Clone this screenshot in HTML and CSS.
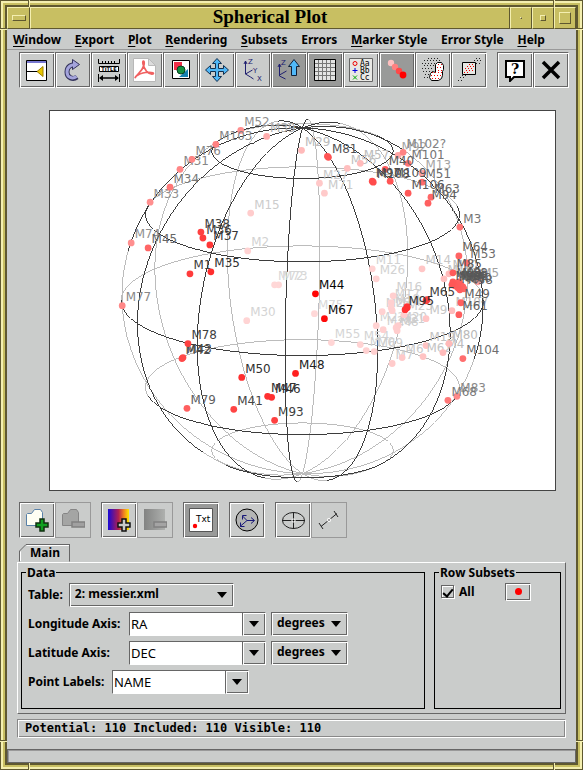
FILE: index.html
```html
<!DOCTYPE html>
<html lang="en">
<head>
<meta charset="utf-8">
<title>Spherical Plot</title>
<link rel="stylesheet" href="styles.css">
</head>
<body>
<div class="window">
  <i class="notch n1"></i><i class="notch n2"></i><i class="notch n3"></i><i class="notch n4"></i>
  <i class="notch v n5"></i><i class="notch v n6"></i><i class="notch v n7"></i><i class="notch v n8"></i>
  <header class="titlebar">
    <button class="tb" aria-label="Window menu"><span class="glyph wide"></span></button>
    <h1>Spherical Plot</h1>
    <button class="tb" aria-label="Lower"><span class="glyph dot"></span></button>
    <button class="tb" aria-label="Minimize"><span class="glyph small"></span></button>
    <button class="tb" aria-label="Maximize"><span class="glyph big"></span></button>
  </header>
  <nav class="menu">
    <a href="#"><u>W</u>indow</a><a href="#"><u>E</u>xport</a><a href="#"><u>P</u>lot</a><a href="#"><u>R</u>endering</a><a href="#"><u>S</u>ubsets</a><a href="#">Errors</a><a href="#"><u>M</u>arker Style</a><a href="#">Error Style</a><a href="#"><u>H</u>elp</a>
  </nav>
  <div class="toolbar">
    <button aria-label="Split window"><svg viewBox="0 0 24 24"><path fill="#fff" stroke="#000" d="M1.500 2.500h20v20h-20z"/><path fill="#7777d0" d="M2 3h19v2H2z"/><path stroke="#000" d="M1 13.500h14"/><path fill="#e8c800" stroke="#a08000" d="M12 13.500l6-5v10z"/></svg></button>
    <button aria-label="Replot"><svg viewBox="0 0 24 24"><path fill="none" stroke="#33335c" stroke-width="5" d="M16 19c-4 3-10 1-10-5s5-8 9-7"/><path fill="#a4a4dc" stroke="#33335c" d="M11.500 1.500l7 5-7 5z"/><path fill="none" stroke="#a4a4dc" stroke-width="3" d="M15.500 18.500c-4 3-9.500 1-9.500-4.500s5-8 9-7"/></svg></button>
    <button aria-label="Axis titles"><svg viewBox="0 0 24 24"><path fill="none" stroke="#000" d="M1.500 1v4.500h21V1M5.500 3v2M8.500 3v2M11.500 3v2M14.500 3v2M17.500 3v2"/><path fill="#fff" stroke="#000" d="M2.500 8.500h19v5h-19z"/><text class="tinytitle" x="12" y="13">TITLE</text><path fill="none" stroke="#000" d="M1.500 16v8M22.500 16v8"/><path stroke="#000" stroke-width="1.500" d="M3 20h18"/><path d="M2 20l4-3v6zM22 20l-4-3v6z"/></svg></button>
    <button aria-label="Export PDF"><svg viewBox="0 0 24 24"><path fill="#fff" stroke="#b8b8b8" d="M.500.500h15l7 7v16H.500z"/><path fill="#ddd" stroke="#bbb" d="M15.500.500v7h7z"/><path fill="none" stroke="#f06060" stroke-width="1.700" d="M2 20c2-4 7-6 9-13 1-5-2-5-1-1 1 5 5 11 10 10 3-2-9-3-15 1-2 1-3 2-3 3z"/></svg></button>
    <button aria-label="Export image"><svg viewBox="0 0 24 24"><path fill="#fff" stroke="#000" d="M3.500 2.500h17v18h-17z"/><path fill="#f03048" d="M5 4h8v8H5z"/><path fill="#1480b0" d="M19 11v8h-9z"/><circle cx="12" cy="12" r="4" fill="#149040" stroke="#064020"/></svg></button>
    <button aria-label="Rescale"><svg viewBox="0 0 24 24"><path fill="#50b8f8" stroke="#103050" d="M12 .500l4.500 5h-3v5h5v-3l5 4.500-5 4.500v-3h-5v5h3l-4.500 5-4.500-5h3v-5h-5v3L.500 12l5-4.500v3h5v-5h-3z"/></svg></button>
    <button aria-label="Axes"><svg viewBox="0 0 24 24"><path fill="none" stroke="#202070" d="M4.500 3v13l5 3 3 2M4.500 16l7-4M3 6l1.500-3L6 6"/><g class="axes"><text x="7" y="6">Z</text><text x="12" y="15">Y</text><text x="16" y="23">X</text></g></svg></button>
    <button class="on" aria-label="Keep north up"><svg viewBox="0 0 24 24"><path fill="none" stroke="#202070" d="M2.500 6v12l6 3M2.500 17l7-4M1 9l1.500-3L4 9"/><g class="axes"><text x="4" y="7">Z</text></g><path fill="#50b8f8" stroke="#102038" d="M17 1.500l5.500 7h-3v9h-5v-9h-3z"/></svg></button>
    <button class="on" aria-label="Grid"><svg viewBox="0 0 24 24"><path fill="#e4e4e4" stroke="#000" d="M1.500 1.500h21v21h-21z"/><path stroke="#777" d="M5.500 2v20M9.500 2v20M13.500 2v20M17.500 2v20M2 5.500h20M2 9.500h20M2 13.500h20M2 17.500h20"/></svg></button>
    <button aria-label="Legend"><svg viewBox="0 0 24 24"><path fill="#e8e8e4" stroke="#666" d="M.500.500h23v23H.500z"/><circle cx="6" cy="5.500" r="2" fill="none" stroke="#e00"/><path stroke="#00d" d="M3.500 12.500h5M6 10v5"/><path stroke="#0a0" d="M4 17.500l4 4M8 17.500l-4 4"/><g class="legend"><text x="11" y="8">Aa</text><text x="11" y="15">Bb</text><text x="11" y="22">Cc</text></g></svg></button>
    <button class="on" aria-label="Fog"><svg viewBox="0 0 24 24"><circle cx="6" cy="5" r="3.200" fill="#ffc0c0"/><circle cx="10" cy="9" r="3.200" fill="#ff8080"/><circle cx="14" cy="13" r="3.200" fill="#ff4848"/><circle cx="18" cy="17" r="3.400" fill="#f00"/></svg></button>
    <button aria-label="Blob subset"><svg viewBox="0 0 24 24"><path class="specks" d="M7 .500h10M3 2.500h17M1 5.500h14M3 7.500h10M1 10.500h11M2 13.500h7M4 16.500h4M3 19.500h4"/><path fill="#fff" stroke="#000" d="M14.500 6.500l2-2h4l2 3v4l-1 2v4l-1 3-3 2h-7l-2-3 1-4 2-2 3 1z"/><path class="reds" d="M17 6.500h4M16 9.500h6M17 12.500h4M11 14.500h10M10 17.500h10M11 20.500h7"/></svg></button>
    <button aria-label="Visible subset"><svg viewBox="0 0 24 24"><path class="specks" d="M19 .500h5M17 2.500h7M19 5.500h4M5 17.500h5M3 19.500h6M1 22.500h5"/><path fill="#e8e8e4" stroke="#000" d="M5.500 4.500h13v12h-13z"/><path class="reds" d="M12 6.500h6M10 8.500h7M8 10.500h8M9 12.500h7M7 14.500h6"/></svg></button>
    <button class="gap" aria-label="Help"><svg viewBox="0 0 24 24"><path fill="#fff" stroke="#000" stroke-width="2" d="M3 3h18v16h-10l-4 4v-4H3z"/><text class="help" x="12" y="16">?</text></svg></button>
    <button aria-label="Close"><svg viewBox="0 0 24 24"><path stroke="#000" stroke-width="3.500" d="M4 4l16 16M20 4L4 20"/></svg></button>
  </div>
  <main>
    <svg class="plot" id="plot" viewBox="49 110 507 380" role="img" aria-label="Sky positions on a sphere"></svg>
    <div class="toolbar lower">
      <button aria-label="Add dataset"><svg viewBox="0 0 24 24"><path fill="#fffff4" stroke="#5880a8" d="M1.500 17.500v-11l1-1h4l3-4h6l2 3v13z"/><path fill="#10a020" stroke="#103010" stroke-width="1.500" d="M15 11h4v4h4v4h-4v4h-4v-4h-4v-4h4z"/></svg></button>
      <button disabled aria-label="Remove dataset"><svg viewBox="0 0 24 24"><path fill="#a4a5a4" stroke="#858585" d="M1.500 17.500v-11l1-1h4l3-4h6l2 3v13z"/><path fill="#a0a0a0" stroke="#808080" stroke-width="1.500" d="M11 14h13v5H11z"/></svg></button>
      <button class="gap" aria-label="Add auxiliary axis"><svg viewBox="0 0 24 24"><defs><linearGradient id="aux"><stop offset="0" stop-color="#1808d8"/><stop offset=".5" stop-color="#b02050"/><stop offset=".75" stop-color="#f08020"/><stop offset="1" stop-color="#ffe800"/></linearGradient><linearGradient id="mono"><stop offset="0" stop-color="#828382"/><stop offset="1" stop-color="#aeb0ae"/></linearGradient></defs><path fill="url(#aux)" d="M1 1h21v21H1z"/><path fill="#c8c8c8" stroke="#111" stroke-width="1.500" d="M15 11h4v4h4v4h-4v4h-4v-4h-4v-4h4z"/></svg></button>
      <button disabled aria-label="Remove auxiliary axis"><svg viewBox="0 0 24 24"><path fill="url(#mono)" d="M1 1h21v21H1z"/><path fill="#a4a4a4" stroke="#808080" stroke-width="1.500" d="M11 14h13v5H11z"/></svg></button>
      <button class="gap on" aria-label="Point labels"><svg viewBox="0 0 24 24"><path fill="#fff" stroke="#555" d="M.500.500h23v23H.500z"/><circle cx="6" cy="18" r="2.200" fill="#f00"/><text class="txt" x="7" y="14">Txt</text></svg></button>
      <button class="gap" aria-label="Radial axis"><svg viewBox="0 0 24 24"><circle cx="12" cy="12" r="11" fill="#b4b5b4" stroke="#000"/><path fill="none" stroke="#181878" d="M12 12.500h7M16 9.500l3.500 3-3.500 3M12 12.500L7.500 8M7.500 11.500v-4h4M12 12.500l-7 6M5.500 14.500v4h4"/></svg></button>
      <button class="gap" aria-label="Tangent errors"><svg viewBox="0 0 24 24"><ellipse cx="12.500" cy="12.500" rx="11" ry="8" fill="none" stroke="#222"/><path stroke="#222" d="M1 12.500h23M12.500 4v17"/><circle cx="12.500" cy="12.500" r="2" fill="#fff"/><circle cx="12.500" cy="12.500" r="1" fill="#000"/></svg></button>
      <button class="flat" aria-label="Radial errors"><svg viewBox="0 0 24 24"><path fill="none" stroke="#222" d="M4 18.500l16-13M2 15l4 6M17 3l4 6"/><circle cx="12" cy="12" r="2" fill="#fff"/><circle cx="12" cy="12" r="1" fill="#888"/></svg></button>
    </div>
    <div class="tabs"><button class="tab"><svg viewBox="0 0 9 9"><path class="cut" d="M0 0h9L0 9z"/><path fill="none" stroke="#666" d="M.500 9V7L7 .500h2"/></svg>Main</button></div>
    <section class="pane">
      <fieldset class="data">
        <legend>Data</legend>
        <div class="row"><label for="tbl">Table:</label><span class="sel table"><select id="tbl"><option>2: messier.xml</option></select></span></div>
        <div class="row"><label class="axis" for="lon">Longitude Axis:</label><span class="combo"><input id="lon" value="RA"><button aria-label="Longitude choices"></button></span><span class="sel unit"><select aria-label="Longitude units"><option>degrees</option></select></span></div>
        <div class="row"><label class="axis" for="lat">Latitude Axis:</label><span class="combo"><input id="lat" value="DEC"><button aria-label="Latitude choices"></button></span><span class="sel unit"><select aria-label="Latitude units"><option>degrees</option></select></span></div>
        <div class="row"><label class="points" for="lab">Point Labels:</label><span class="combo"><input id="lab" value="NAME"><button aria-label="Label choices"></button></span></div>
      </fieldset>
      <fieldset class="subsets">
        <legend>Row Subsets</legend>
        <div class="row"><label><input type="checkbox" checked>All</label><button class="marker" aria-label="Marker style"><i></i></button></div>
      </fieldset>
    </section>
    <output class="status">Potential: 110 Included: 110 Visible: 110</output>
  </main>
  <div class="progress"></div>
</div>
<script src="plot.js"></script>
</body>
</html>
```
FILE: styles.css
```css
* { box-sizing: border-box; }
body { margin: 0; font: bold 12px/16px "Noto Sans", "Open Sans", sans-serif; color: #000; }
button, input, select { font: inherit; color: inherit; border-radius: 0; padding: 0; margin: 0; }
.window {
  position: relative; min-height: 100vh; padding: 7px; display: flex; flex-direction: column;
  background: #cacccb; background-clip: content-box; border: 0;
  box-shadow: inset 0 0 0 1px #5f5830, inset 0 0 0 3px #f4efb0, inset 0 0 0 5px #c8bf62, inset 0 0 0 7px #5f5830;
}
.notch { position: absolute; width: 2px; height: 7px; background: #5f5830; border-right: 1px solid #f4efb0; }
.notch.v { width: 7px; height: 2px; border-right: 0; border-bottom: 1px solid #f4efb0; }
.n1 { left: 28px; top: 0; } .n2 { right: 28px; top: 0; } .n3 { left: 28px; bottom: 0; } .n4 { right: 28px; bottom: 0; }
.n5 { left: 0; top: 28px; } .n6 { right: 0; top: 28px; } .n7 { left: 0; bottom: 28px; } .n8 { right: 0; bottom: 28px; }
.titlebar { display: flex; height: 22px; background: #c8bf62; }
.titlebar h1, .tb { border: 1px solid; border-color: #f4efb0 #5f5830 #5f5830 #f4efb0; }
.titlebar h1 { flex: 1; margin: 0; font: bold 19px/18px "Liberation Serif", serif; text-align: center; }
.tb { width: 22px; background: #c8bf62; display: grid; place-items: center; }
.tb:first-child { width: 23px; }
.glyph { border: 1px solid; border-color: #f4efb0 #5f5830 #5f5830 #f4efb0; }
.wide { width: 14px; height: 6px; } .dot { width: 2px; height: 2px; } .small { width: 6px; height: 6px; } .big { width: 12px; height: 12px; }
.menu { display: flex; justify-content: space-between; height: 21px; padding: 3px 31px 0 6px; border-bottom: 1px solid #999; }
.menu a { color: inherit; text-decoration: none; }
.menu u { text-underline-offset: 2px; }
.toolbar { display: flex; padding: 2px 0 0 12px; }
.toolbar button { flex: none; width: 36px; height: 36px; display: grid; place-items: center; }
.toolbar svg { width: 24px; height: 24px; }
.toolbar .gap { margin-left: 10px; }
button, .sel {
  background: #cacccb; border: 1px solid; border-color: #666 #fff #fff #666;
  box-shadow: inset 1px 1px #fff, inset -1px -1px #666;
}
.titlebar .tb { box-shadow: none; background: #c8bf62; border-color: #f4efb0 #5f5830 #5f5830 #f4efb0; }
.toolbar .on { background: #999a99; }
.toolbar button:disabled, .toolbar .flat { border-color: #999; box-shadow: none; }
.tinytitle { font: bold 5px "DejaVu Sans", sans-serif; text-anchor: middle; }
.axes text { font: 7px "DejaVu Sans", sans-serif; fill: #202070; }
.legend text { font: 8px "DejaVu Sans Mono", monospace; }
.help { font: bold 14px "DejaVu Serif", serif; text-anchor: middle; }
.txt { font: 9px "DejaVu Sans", sans-serif; }
.specks { stroke: #222; stroke-dasharray: 1 2; shape-rendering: crispEdges; }
.reds { stroke: #e00; stroke-dasharray: 1 2; shape-rendering: crispEdges; }
main { flex: 1; padding: 22px 10px 0; }
.plot { display: block; width: calc(100% - 42px); margin: 0 10px 0 32px; background: #fff; border: 1px solid #444; }
.plot polyline { fill: none; shape-rendering: crispEdges; }
.plot text { font: 12px "DejaVu Sans", sans-serif; }
.lower { padding: 11px 0 0 2px; }
.tabs { padding: 6px 0 0 2px; }
.tab { position: relative; height: 18px; width: 51px; display: block; padding-left: 1px; border-color: #666 #666 transparent #666; box-shadow: inset 1px 1px #fff; }
.tab svg { position: absolute; left: -1px; top: -1px; width: 9px; height: 9px; }
.cut { fill: #cacccb; }
.pane { display: flex; gap: 9px; padding: 3px 4px 4px 3px; border: 1px solid; border-color: #fff #666 #666 #fff; }
fieldset { min-width: 0; margin: 0; border: 1px solid #000; padding: 0 6px; height: 143px; }
legend { padding: 0 1px; margin-left: -2px; line-height: 13px; }
.data { flex: 1; } .subsets { width: 127px; }
.row { display: flex; align-items: center; margin-bottom: 5px; }
.row:first-of-type { margin-top: 4px; }
.axis { width: 101px; } .points { width: 84px; }
.sel { position: relative; height: 24px; display: block; }
.sel::after, .combo button::after { content: ""; position: absolute; right: 6px; top: 8px; border: 5px solid transparent; border-top: 6px solid #000; border-bottom: 0; }
.sel select { appearance: none; width: 100%; height: 21px; background: none; border: 0; padding-left: 5px; }
.table { width: 165px; margin-left: 6px; } .unit { width: 77px; margin-left: 5px; }
.combo { display: flex; height: 24px; }
.combo input { width: 114px; background: #fff; border: 1px solid; border-color: #666 #666 #fff #666; padding-left: 1px; font-weight: normal; font-size: 13px; }
.combo button { position: relative; width: 23px; border-left: 0; }
.subsets .row { justify-content: space-between; padding-right: 23px; }
.subsets label { display: flex; align-items: center; gap: 5px; }
input[type="checkbox"] { appearance: none; width: 13px; height: 13px; border: 1px solid #666; box-shadow: inset 1px 1px #fff, 1px 1px #fff; display: grid; place-items: center; }
input[type="checkbox"]:checked::after { content: ""; width: 8px; height: 4px; border: 2px solid #000; border-width: 0 0 2px 2px; transform: rotate(-50deg); }
.marker { width: 26px; height: 18px; display: grid; place-items: center; }
.marker i { width: 7px; height: 7px; border-radius: 50%; background: #f00; }
.status { display: block; height: 19px; margin-top: 5px; padding-left: 7px; font: bold 12px/16px "DejaVu Sans Mono", monospace; border: 1px solid; border-color: #888 #fff #fff #888; box-shadow: inset 1px 1px #fff, inset -1px -1px #888; }
.progress { height: 14px; border: 1px solid #666; box-shadow: inset 1px 1px #999; }
```
FILE: plot.js
```js
const svg = document.getElementById('plot');
const R = 182, CX = 302.5, CY = 300.5;
const TILT = 17.6 * Math.PI / 180, SPIN = -5.5;
const rad = (d) => d * Math.PI / 180;

function add(name, attrs, text) {
  const el = document.createElementNS('http://www.w3.org/2000/svg', name);
  for (const key in attrs) el.setAttribute(key, attrs[key]);
  if (text) el.textContent = text;
  svg.appendChild(el);
}

// Orthographic projection of a latitude/longitude in degrees.
function project(lat, lon) {
  const p = rad(lat), l = rad(lon + SPIN);
  const up = Math.sin(p) * Math.cos(TILT) - Math.cos(p) * Math.cos(l) * Math.sin(TILT);
  const depth = Math.sin(p) * Math.sin(TILT) + Math.cos(p) * Math.cos(l) * Math.cos(TILT);
  return [CX + R * Math.cos(p) * Math.sin(l), CY - R * up, depth];
}

// Draws the part of a curve lying on one side of the sphere.
function curve(points, front) {
  let run = [];
  const flush = () => {
    if (run.length > 1) add('polyline', { points: run.join(' '), stroke: front ? '#3c3c3c' : '#bcbcbc' });
    run = [];
  };
  for (const [x, y, d] of points) {
    if ((d >= -0.01) === front || (!front && d < 0.01)) run.push(x.toFixed(1) + ',' + y.toFixed(1));
    else flush();
  }
  flush();
}

function grid(front) {
  for (let lat = -60; lat <= 60; lat += 30) {
    const pts = [];
    for (let lon = -180; lon <= 180; lon += 1) pts.push(project(lat, lon));
    curve(pts, front);
  }
  for (let lon = -180; lon < 180; lon += 30) {
    const pts = [];
    for (let lat = -90; lat <= 90; lat += 1) pts.push(project(lat, lon));
    curve(pts, front);
  }
}

// Name, x, y; a dash stands for an unlabelled neighbour.
const near = `M52 240 129,M103 215 143,M76 191 158,M31 179 168,M34 169 186,M33 149 201,M74 130 242,M45 147 247,M38 200 231,
M36 202 237,M37 209 244,M1 189 273,M35 210 271,M77 121 305,M78 187 343,M42 181 358,M43 182 357,M50 241 377,M48 295 373,
M79 186 408,M41 233 409,M47 267 396,M46 271 397,M93 274 420,M81 328 156,- 327 155,M102? 403 151,M101 408 162,M40 385 168,
M97 372 180,M108 373 181,M109 390 180,M51 422 181,M106 408 192,M63 431 196,M94 428 202,M3 460 226,M64 459 255,M53 467 262,
M85 453 272,M84 457 284,M87 458 287,M86 455 285,M99 453 281,M98 452 284,M88 459 281,M91 461 284,M58 464 288,- 460 289,
M60 463 286,M49 461 302,M61 459 314,M65 426 300,- 427 299,M95 405 309,- 407 307,- 407 306,M44 315 293,M67 324 318,
M104 463 358,M68 448 400,M83 457 396`;
const far = `M39 266 135,M15 250 212,M2 247 250,M72 274 284,M73 278 284,M30 246 320,M29 301 149,M56 347 167,M57 360 162,
M27 319 182,M71 324 192,M92 398 154,M13 422 172,M5 478 281,M11 372 268,M26 376 278,M14 422 268,M12 444 278,M10 449 273,
M16 393 295,M17 391 302,M18 391 307,M24 392 310,M25 382 311,M23 404 314,M9 426 318,M22 376 325,M28 383 329,M8 397 330,
M20 398 325,M21 396 327,M107 452 310,M75 314 313,M55 331 342,M54 360 344,M70 366 350,M69 374 351,M19 426 345,M7 392 363,
M6 402 357,M62 423 356,M4 443 352,M80 449 343`;

function parse(list, side) {
  return list.split(',').map((item) => {
    const [name, x, y] = item.trim().split(' ');
    const r2 = ((x - CX) ** 2 + (y - CY) ** 2) / (R * R);
    return { name, x: +x, y: +y, depth: side * Math.sqrt(Math.max(0, 1 - r2)) };
  });
}

grid(false);
grid(true);
const objects = parse(far, -1).concat(parse(near, 1)).sort((a, b) => a.depth - b.depth);
for (const o of objects) {
  const fade = Math.round(216 * ((1 - o.depth) / 2) ** 0.6);
  add('circle', { cx: o.x + 0.5, cy: o.y + 0.5, r: 3.4, fill: `rgb(255,${fade},${fade})` });
  if (o.name !== '-') add('text', { x: o.x + 4, y: o.y - 4, fill: `rgb(${fade},${fade},${fade})` }, o.name);
}
```
